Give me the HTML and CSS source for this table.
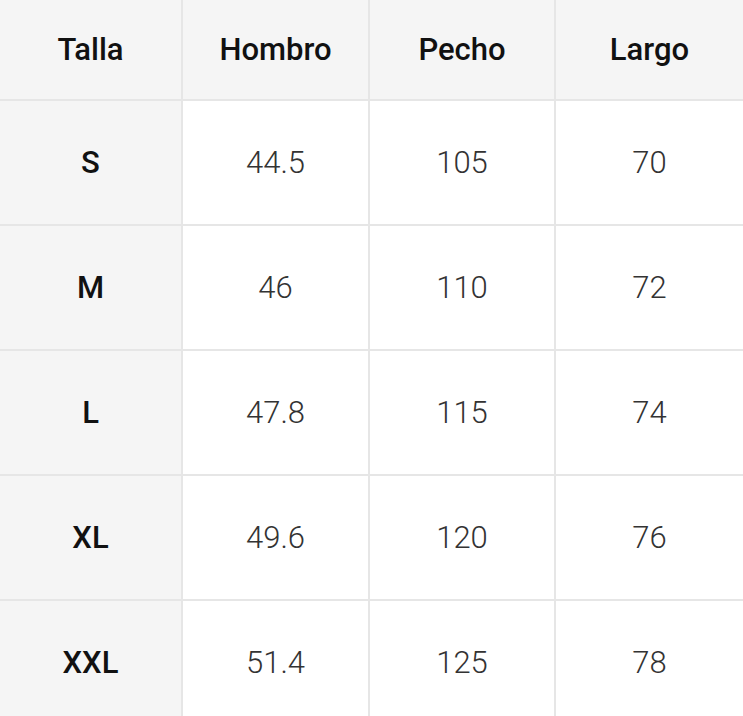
FILE: index.html
```html
<!DOCTYPE html>
<html lang="es">
<head>
<meta charset="utf-8">
<title>Tabla de tallas</title>
<link rel="stylesheet" href="styles.css">
</head>
<body>
<div class="size-table" role="table">
  <div class="cell head" role="columnheader">Talla</div>
  <div class="cell head" role="columnheader">Hombro</div>
  <div class="cell head" role="columnheader">Pecho</div>
  <div class="cell head last" role="columnheader">Largo</div>

  <div class="cell size" role="rowheader">S</div>
  <div class="cell val">44.5</div>
  <div class="cell val">105</div>
  <div class="cell val last">70</div>

  <div class="cell size" role="rowheader">M</div>
  <div class="cell val">46</div>
  <div class="cell val">110</div>
  <div class="cell val last">72</div>

  <div class="cell size" role="rowheader">L</div>
  <div class="cell val">47.8</div>
  <div class="cell val">115</div>
  <div class="cell val last">74</div>

  <div class="cell size" role="rowheader">XL</div>
  <div class="cell val">49.6</div>
  <div class="cell val">120</div>
  <div class="cell val last">76</div>

  <div class="cell size" role="rowheader">XXL</div>
  <div class="cell val">51.4</div>
  <div class="cell val">125</div>
  <div class="cell val last">78</div>
</div>
</body>
</html>
```
FILE: styles.css
```css
html, body {
  margin: 0;
  padding: 0;
  background: #ffffff;
}

body {
  font-family: Roboto, "Liberation Sans", Arial, sans-serif;
  overflow: hidden;
}

.size-table {
  display: grid;
  grid-template-columns: 183px 187px 186px 1fr;
  grid-template-rows: 101px repeat(5, 125px);
  width: 743px;
}

.cell {
  display: flex;
  align-items: center;
  justify-content: center;
  border-right: 2px solid #e6e6e6;
  border-bottom: 2px solid #e6e6e6;
  font-size: 31px;
  line-height: 1;
}

.cell.last {
  border-right: none;
}

.head {
  background: #f5f5f5;
  color: #111111;
  font-weight: 500;
}

.size {
  background: #f5f5f5;
  color: #111111;
  font-weight: 500;
}

.val {
  background: #ffffff;
  color: #333333;
  font-weight: 300;
}
```
